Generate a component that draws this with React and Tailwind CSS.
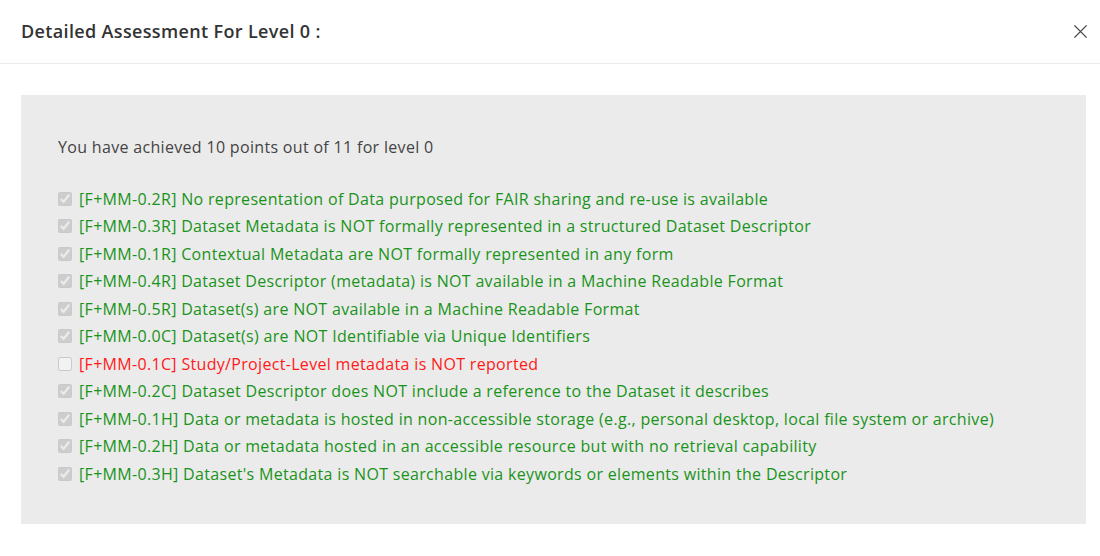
const ITEMS = [
    { code: 'F+MM-0.2R', text: 'No representation of Data purposed for FAIR sharing and re-use is available', passed: true },
    { code: 'F+MM-0.3R', text: 'Dataset Metadata is NOT formally represented in a structured Dataset Descriptor', passed: true },
    { code: 'F+MM-0.1R', text: 'Contextual Metadata are NOT formally represented in any form', passed: true },
    { code: 'F+MM-0.4R', text: 'Dataset Descriptor (metadata) is NOT available in a Machine Readable Format', passed: true },
    { code: 'F+MM-0.5R', text: 'Dataset(s) are NOT available in a Machine Readable Format', passed: true },
    { code: 'F+MM-0.0C', text: 'Dataset(s) are NOT Identifiable via Unique Identifiers', passed: true },
    { code: 'F+MM-0.1C', text: 'Study/Project-Level metadata is NOT reported', passed: false },
    { code: 'F+MM-0.2C', text: 'Dataset Descriptor does NOT include a reference to the Dataset it describes', passed: true },
    { code: 'F+MM-0.1H', text: 'Data or metadata is hosted in non-accessible storage (e.g., personal desktop, local file system or archive)', passed: true },
    { code: 'F+MM-0.2H', text: 'Data or metadata hosted in an accessible resource but with no retrieval capability', passed: true },
    { code: 'F+MM-0.3H', text: "Dataset's Metadata is NOT searchable via keywords or elements within the Descriptor", passed: true },
];

export default function App() {
    return (
        <div className="h-[556px] w-[1100px] bg-white font-['Open_Sans','Noto_Sans',sans-serif] tracking-[0.32px] text-[#212529]">
            {/* Header */}
            <div className="flex h-[64px] items-center justify-between border-b border-[#e9ecef] pl-[21px] pr-[4px]">
                <h5 className="text-[18px] font-semibold tracking-[0.35px] text-[#333]">Detailed Assessment For Level 0 :</h5>
                <button className="flex h-8 w-8 items-center justify-center text-[#444]">
                    <svg width="15" height="15" viewBox="0 0 16 16" fill="none" stroke="currentColor" strokeWidth="1.4">
                        <path d="M1.5 1.5l13 13M14.5 1.5l-13 13" />
                    </svg>
                </button>
            </div>

            {/* Body */}
            <div className="pt-[31px]">
                <div className="ml-[21px] h-[429px] w-[1065px] bg-[#ebebeb] px-[37px] pt-[40px]">
                    <p className="text-[16px] leading-[24px] text-[#444]">You have achieved 10 points out of 11 for level 0</p>
                    <div className="mt-[26px] flex flex-col">
                        {ITEMS.map((item) => (
                            <label key={item.code} className="flex h-[27.5px] items-center gap-[7px] text-[16px]">
                                <input type="checkbox" checked={item.passed} disabled readOnly className="m-0 h-[14px] w-[14px]" />
                                <span className={item.passed ? 'text-[#1a931a]' : 'text-[#ff1a1a]'}>
                                    [{item.code}] {item.text}
                                </span>
                            </label>
                        ))}
                    </div>
                </div>
            </div>
        </div>
    );
}
